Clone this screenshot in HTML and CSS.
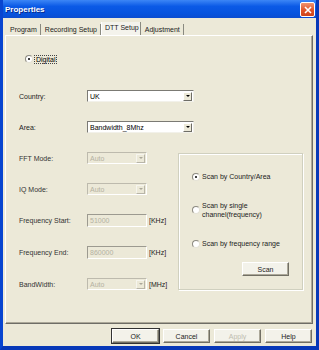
FILE: index.html
```html
<!DOCTYPE html>
<html>
<head>
    <title>Properties</title>
    <link rel="stylesheet" href="styles.css">
</head>
<body>
    <div class="window">
        <div class="titlebar">
            <span class="title">Properties</span>
            <span class="close">
                <svg width="8" height="8" viewBox="0 0 8 8"><path d="M1 1L7 7M7 1L1 7" stroke="#fff" stroke-width="1.6"/></svg>
            </span>
        </div>
        <div class="client">
            <div class="tabs">
                <span class="tab">Program</span>
                <span class="tab">Recording Setup</span>
                <span class="tab active">DTT Setup</span>
                <span class="tab">Adjustment</span>
            </div>
            <div class="panel">
                <div class="form">
                    <div class="row digital">
                        <span class="radio checked"></span>
                        <span class="focus">Digital</span>
                    </div>
                    <div class="row">
                        <span class="label">Country:</span>
                        <div class="combo wide"><span class="value">UK</span><span class="arrow"></span></div>
                    </div>
                    <div class="row">
                        <span class="label">Area:</span>
                        <div class="combo wide"><span class="value">Bandwidth_8Mhz</span><span class="arrow"></span></div>
                    </div>
                    <div class="row">
                        <span class="label dim">FFT Mode:</span>
                        <div class="combo off"><span class="value">Auto</span><span class="arrow"></span></div>
                    </div>
                    <div class="row">
                        <span class="label dim">IQ Mode:</span>
                        <div class="combo off"><span class="value">Auto</span><span class="arrow"></span></div>
                    </div>
                    <div class="row tall">
                        <span class="label dim">Frequency Start:</span>
                        <div class="field off">51000</div>
                        <span class="unit">[KHz]</span>
                    </div>
                    <div class="row tall">
                        <span class="label dim">Frequency End:</span>
                        <div class="field off">860000</div>
                        <span class="unit">[KHz]</span>
                    </div>
                    <div class="row">
                        <span class="label dim">BandWidth:</span>
                        <div class="combo off"><span class="value">Auto</span><span class="arrow"></span></div>
                        <span class="unit">[MHz]</span>
                    </div>
                </div>
                <div class="group">
                    <div class="option">
                        <span class="radio checked"></span>
                        <span>Scan by Country/Area</span>
                    </div>
                    <div class="option">
                        <span class="radio"></span>
                        <span>Scan by single<br>channel(frequency)</span>
                    </div>
                    <div class="option">
                        <span class="radio"></span>
                        <span>Scan by frequency range</span>
                    </div>
                    <div class="scan-row">
                        <span class="button">Scan</span>
                    </div>
                </div>
            </div>
            <div class="buttons">
                <span class="button default">OK</span>
                <span class="button">Cancel</span>
                <span class="button disabled">Apply</span>
                <span class="button">Help</span>
            </div>
        </div>
    </div>
</body>
</html>
```

FILE: styles.css
```css
body {
    margin: 0;
    font-family: "Liberation Sans", Arial, sans-serif;
    font-size: 7px;
    color: #000;
    background: #0a4fd6;
}
.window {
    width: 319px;
    height: 350px;
    box-sizing: border-box;
    display: flex;
    flex-direction: column;
    background: linear-gradient(#0b5fe8, #0853dc);
    border-left: 3px solid #0845d0;
    border-right: 3px solid #0738b8;
    border-bottom: 4px solid #0738b8;
}
.titlebar {
    height: 18px;
    display: flex;
    align-items: center;
    justify-content: space-between;
    padding: 0 1px 0 2px;
    background: linear-gradient(#3c86f6, #0b5ae6 35%, #0653de 75%, #0a4cd0);
}
.title {
    color: #fff;
    font-size: 8px;
    font-weight: bold;
    text-shadow: 1px 1px 0 #0a2a8a;
}
.close {
    width: 15px;
    height: 15px;
    box-sizing: border-box;
    display: flex;
    align-items: center;
    justify-content: center;
    border: 1px solid #fff;
    border-radius: 2px;
    background: linear-gradient(#f09470, #e05428 55%, #cc441c);
    margin-top: 1px;
}
.client {
    flex: 1;
    display: flex;
    flex-direction: column;
    background: #ece9d8;
    padding: 4px 3px 3px 2px;
}
.tabs {
    display: flex;
    align-items: flex-end;
    height: 13px;
    padding-left: 1px;
}
.tab {
    height: 11px;
    line-height: 11px;
    padding: 0 3px 0 4px;
    border-right: 1px solid #8a8a80;
    color: #222;
}
.tab.active {
    height: 13px;
    line-height: 12px;
    background: #f4f3ec;
    border-left: 1px solid #fff;
    padding: 0 1px 0 3px;
}
.panel {
    height: 289px;
    box-sizing: border-box;
    display: flex;
    border-top: 1px solid #fff;
    border-left: 1px solid #fff;
    border-right: 1px solid #6e6d66;
    border-bottom: 1px solid #6e6d66;
    box-shadow: inset -1px -1px 0 #aca899;
}
.form {
    width: 172px;
    flex: none;
    box-sizing: border-box;
    padding: 17px 0 0 13px;
    display: flex;
    flex-direction: column;
    gap: 19px;
}
.row {
    height: 12px;
    display: flex;
    align-items: center;
}
.row.tall {
    height: 13px;
}
.row.digital {
    margin-bottom: 6px;
    padding-left: 6px;
}
.label {
    width: 68px;
    flex: none;
    color: #222;
}
.label.dim {
    color: #333;
}
.focus {
    margin-left: 2px;
    padding: 0 1px;
    outline: 1px dotted #444;
}
.radio {
    width: 8px;
    height: 8px;
    box-sizing: border-box;
    flex: none;
    border-radius: 50%;
    border: 1px solid #8c8a80;
    border-right-color: #e4e2d6;
    border-bottom-color: #e4e2d6;
    background: #fff;
    position: relative;
}
.radio.checked::after {
    content: "";
    position: absolute;
    left: 2px;
    top: 2px;
    width: 2px;
    height: 2px;
    border-radius: 50%;
    background: #000;
}
.combo {
    width: 60px;
    height: 12px;
    flex: none;
    box-sizing: border-box;
    display: flex;
    align-items: center;
    justify-content: space-between;
    border: 1px solid #7b7a74;
    border-right-color: #f2f1ea;
    border-bottom-color: #f2f1ea;
    background: #fff;
    padding-left: 2px;
}
.combo.wide {
    width: 107px;
}
.combo.off,
.field.off {
    background: #ece9d8;
    color: #b4b1a2;
    border-color: #bdbaad;
    border-right-color: #fff;
    border-bottom-color: #fff;
}
.arrow {
    width: 9px;
    height: 9px;
    box-sizing: border-box;
    margin-right: 1px;
    display: flex;
    align-items: center;
    justify-content: center;
    background: #ece9d8;
    border: 1px solid #fff;
    border-right-color: #6e6d66;
    border-bottom-color: #6e6d66;
}
.arrow::before {
    content: "";
    border-left: 2px solid transparent;
    border-right: 2px solid transparent;
    border-top: 2px solid #000;
}
.combo.off .arrow {
    border-color: #f6f5ee;
    border-right-color: #b8b5a8;
    border-bottom-color: #b8b5a8;
}
.combo.off .arrow::before {
    border-top-color: #aaa79a;
}
.field {
    width: 60px;
    height: 13px;
    flex: none;
    box-sizing: border-box;
    padding: 1px 2px 0;
    line-height: 9px;
    display: flex;
    align-items: flex-start;
    border: 1px solid #7b7a74;
}
.field.off {
    border-color: #9c9a90;
    border-right-color: #fff;
    border-bottom-color: #fff;
}
.unit {
    margin-left: 2px;
    color: #222;
}
.group {
    width: 125px;
    height: 137px;
    margin-top: 117px;
    box-sizing: border-box;
    border: 1px solid #d0d0bf;
    box-shadow: inset 1px 1px 0 #fff, 1px 1px 0 #fff;
    padding: 18px 13px 0 13px;
    display: flex;
    flex-direction: column;
    gap: 20px;
}
.option {
    display: flex;
    align-items: center;
    gap: 2px;
    line-height: 9px;
    color: #222;
}
.scan-row {
    display: flex;
    justify-content: flex-end;
    margin-top: -6px;
}
.button {
    width: 47px;
    height: 14px;
    box-sizing: border-box;
    display: flex;
    align-items: center;
    justify-content: center;
    background: #f3f2ea;
    border: 1px solid #fff;
    border-right-color: #716f64;
    border-bottom-color: #716f64;
    box-shadow: inset -1px -1px 0 #aca899;
    color: #222;
}
.button.default {
    outline: 1px solid #333;
}
.button.disabled {
    color: #c0bdb0;
}
.buttons {
    display: flex;
    justify-content: flex-end;
    gap: 4px;
    margin-top: 5px;
    padding-right: 1px;
}
```
